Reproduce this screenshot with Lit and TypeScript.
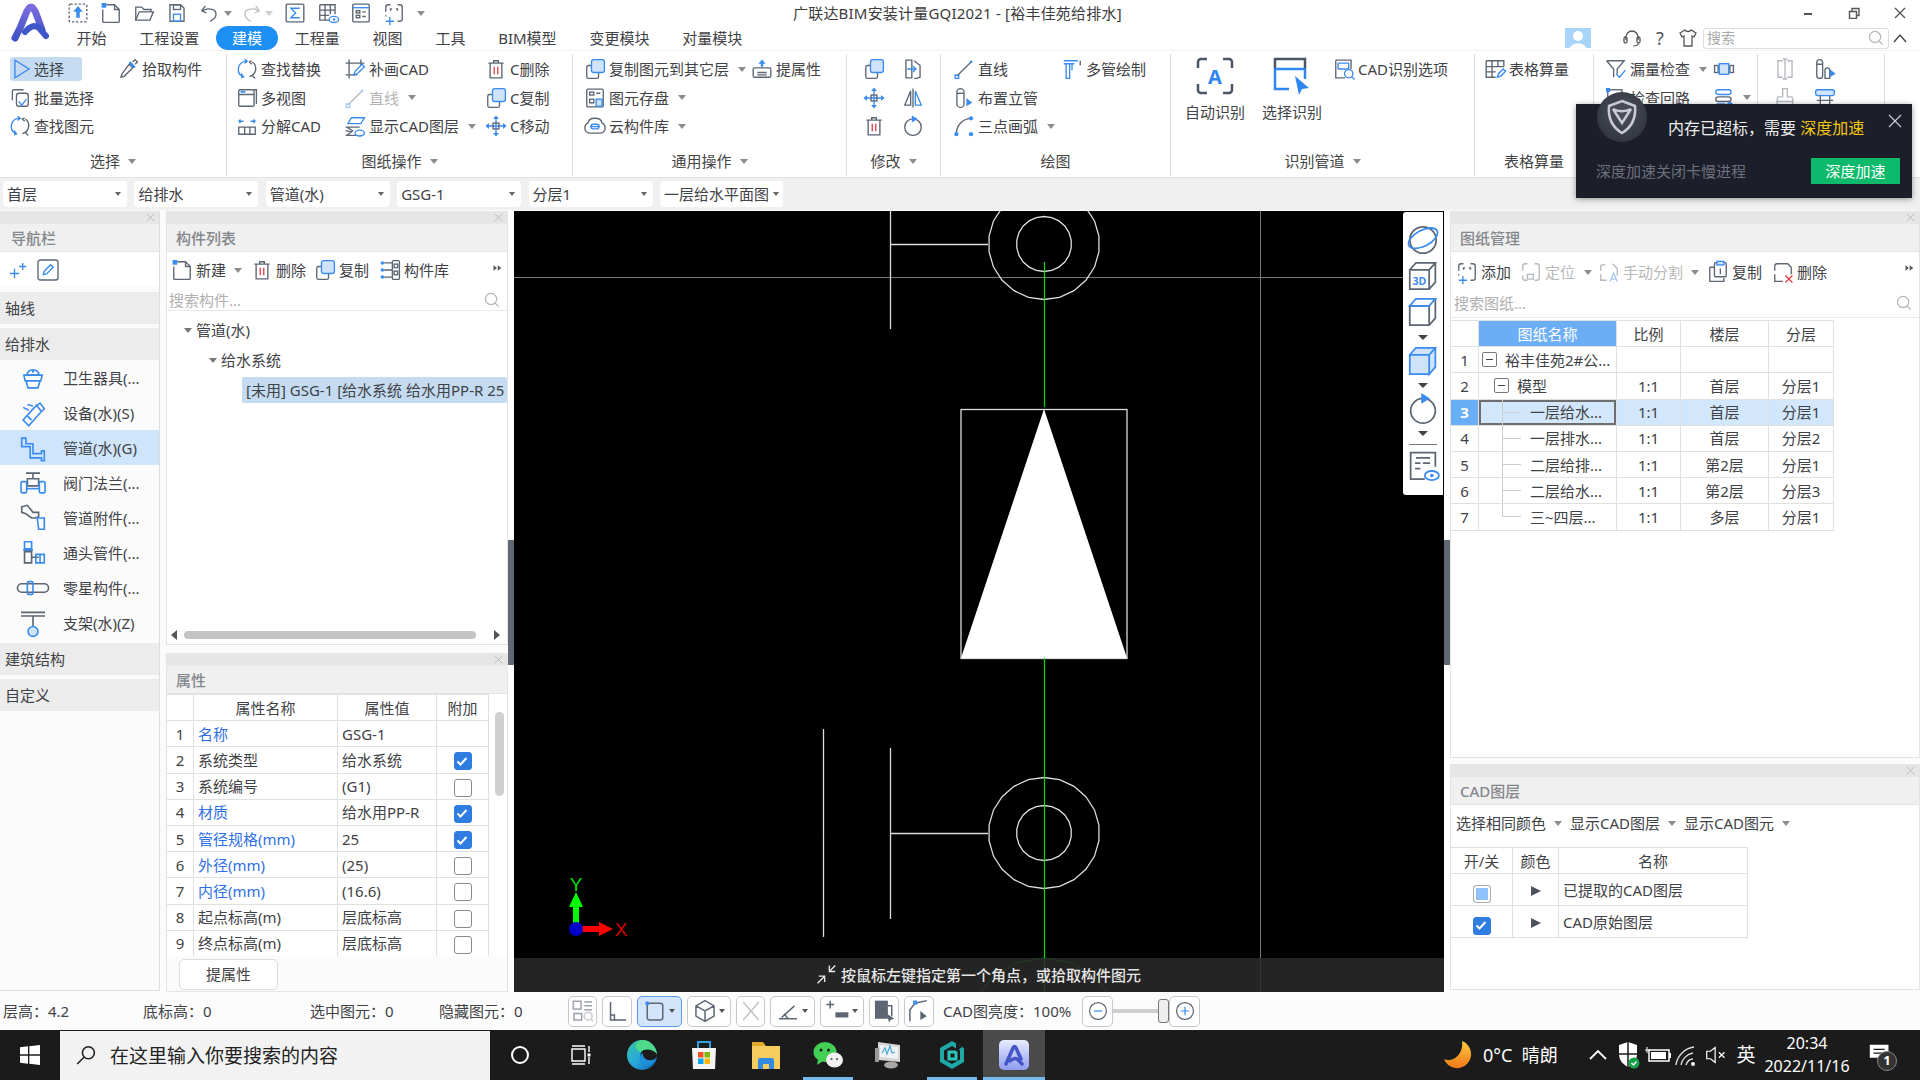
import { LitElement, html, css, svg } from "lit";
import { customElement } from "lit/decorators.js";

const ICONS: Record<string, any> = {
  upload: svg`<rect class="d" x="2.5" y="2.5" width="15" height="15" rx="1"/><path class="bf" d="M10 4l4 5h-2.5v5h-3V9H6z"/>`,
  newf: svg`<path class="g" d="M6 3h7l4 4v10a1 1 0 0 1-1 1H4a1 1 0 0 1-1-1V7"/><path class="g" d="M13 3v4h4"/><rect class="bf" x="2" y="1.5" width="4" height="4"/>`,
  open: svg`<path class="g" d="M3 16V5h5l2 2h6v2"/><path class="g" d="M3 16l3-7h12l-3 7z"/>`,
  save: svg`<path class="g" d="M4 3h9l3 3v11H4z"/><rect class="g" x="7" y="3" width="6" height="4"/><rect class="b" x="7" y="11" width="6" height="6"/>`,
  undo: svg`<path class="g" d="M6 4L3 8l4 2"/><path class="g" d="M3.500 8C9 5 16 7 15 12c-.5 3-3 4-5 5"/>`,
  redo: svg`<path class="g" d="M14 4l3 4-4 2"/><path class="g" d="M16.500 8C11 5 4 7 5 12c.5 3 3 4 5 5"/>`,
  sigma: svg`<rect class="g" x="2.500" y="2.500" width="15" height="15" rx="1"/><path class="b" d="M14 6H6.500l4 4-4 4H14"/>`,
  gridEye: svg`<path class="g" d="M3 3h13v8M3 3v13h8M3 7.500h13M3 12h8M7.500 3v13M12 3v8"/><ellipse class="b" cx="15" cy="15.500" rx="4" ry="2.600"/><circle class="bf" cx="15" cy="15.500" r="1"/>`,
  listDoc: svg`<rect class="g" x="3" y="2.500" width="14" height="15" rx="1"/><path class="b" d="M3 5.500h14"/><rect class="g" x="6" y="8" width="3" height="2"/><rect class="g" x="6" y="12" width="3" height="2"/><path class="g" d="M11 9h3M11 13h3"/>`,
  cadAdd: svg`<path class="g" d="M3 9V5a2 2 0 0 1 2-2h2M13 3h2a2 2 0 0 1 2 2v10a2 2 0 0 1-2 2h-2M3 12v1"/><path class="b" d="M3 17h7M6.500 13.500v7"/><path class="g" d="M7 8V6.500h1.500M13 8V6.500h-1.500"/>`,
  select: svg`<path class="b" d="M4 2.500v15L16 10z"/>`,
  batch: svg`<path class="g" d="M13 3H5a1.500 1.500 0 0 0-1.500 1.500V12"/><rect class="g" x="7" y="6" width="10" height="11" rx="2"/><path class="b" d="M9 13l2.500 3 4-5"/>`,
  find: svg`<path class="b" d="M8 3.500A7 7 0 0 0 5.500 16"/><path class="g" d="M12 16.500A7 7 0 0 0 14.500 4"/><path class="bf" d="M8 1v5l3-2.500zM5 13v5l3-1z"/><path class="g" d="M14 3l-2 1 2 2M14 15l3 3"/>`,
  pick: svg`<path class="g" d="M11 6l3 3-7 7-3 1 1-3z"/><path class="bf" d="M12 3.500l4.500 4.500-1.500 1.500L10.500 5z"/><path class="g" d="M14 4l2-2 2 2-2 2"/>`,
  multi: svg`<rect class="g" x="3" y="3" width="13" height="14" rx="1"/><path class="g" d="M3 7h13M16 3h2v12"/><rect class="bf" x="4.500" y="4" width="4" height="1.500"/>`,
  split: svg`<path class="b" d="M3 6h4M3 6l1.500-1.500M3 6l1.500 1.500M17 6h-4M17 6l-1.500-1.500M17 6l-1.500 1.500"/><path class="g" d="M3 11h14v6H3zM8 11v6M12.500 11v6"/>`,
  redraw: svg`<path class="g" d="M5 2v16M2 5h16M2 15h10M15 2v5"/><path class="b" d="M9 15l1-3 6-6 2 2-6 6z"/>`,
  line: svg`<path class="g" d="M4 16L16 4"/><rect class="b" x="2.500" y="15" width="3" height="3"/><circle class="bf" cx="16" cy="4" r="1.200"/>`,
  layers: svg`<path class="b" d="M4 8l3-5h11l-3 5z"/><path class="g" d="M2 11h12M2 14l5 1M2 18h9M3 11l5 3-5 4"/><ellipse class="b" cx="14" cy="16" rx="4" ry="2.500"/>`,
  del: svg`<path class="g" d="M3.500 5h13M8 5V3h4v2M5 5v12.500h10V5"/><path class="r" d="M8.500 8v6.500M11.500 8v6.500"/>`,
  copy: svg`<rect class="g" x="3" y="7" width="10" height="11" rx="1.500"/><rect class="bfs" x="7" y="2" width="11" height="11" rx="2"/>`,
  move: svg`<path class="b" d="M10 2.500v15M2.500 10h15"/><path class="bf" d="M10 1l2.500 3h-5zM10 19l2.500-3h-5zM1 10l3-2.500v5zM19 10l-3-2.500v5z"/><rect class="g" x="7.500" y="7.500" width="5" height="5"/>`,
  store: svg`<rect class="g" x="3" y="2.500" width="14" height="15" rx="1"/><rect class="g" x="5.500" y="5" width="3.500" height="2.500"/><path class="g" d="M11 6h3.500M5.500 11h3.500v3H5.500z"/><rect class="bfs" x="11" y="11" width="5" height="6"/>`,
  cloud: svg`<path class="g" d="M5 16a4.500 4.500 0 0 1-1-8.500C5 2 15 2 16 7.500A4.500 4.500 0 0 1 15 16z"/><rect class="b" x="6.500" y="8.500" width="7" height="4" rx="2"/><path class="b" d="M6.500 10.500h7"/>`,
  lift: svg`<rect class="g" x="2.500" y="9" width="15" height="8" rx="1"/><path class="g" d="M6 13h8M6 15h8"/><path class="bf" d="M10 2l3 3.500h-2V8H9V5.500H7z"/>`,
  mirror: svg`<path class="g" d="M8 4v12H3z"/><path class="b" d="M12 4v12h5z"/><path class="g" d="M10 2v16"/>`,
  rotate: svg`<circle class="g" cx="10" cy="11" r="7"/><path class="bf" d="M9 1l5 3-5 3z"/>`,
  flip: svg`<path class="g" d="M4 2.500h5v15H4zM11 3l5 4v10l-3 1h-2"/><path class="b" d="M5 10h7M10 7.500l2.500 2.500-2.500 2.500"/>`,
  riser: svg`<rect class="g" x="4" y="2" width="6" height="16" rx="3"/><path class="g" d="M4 6h6"/><path class="bf" d="M12 10l5 4-5 3z"/>`,
  arc: svg`<path class="g" d="M3.500 16C4 9 9 4 15.500 3.500"/><circle class="bf" cx="3.500" cy="17" r="1.800"/><circle class="bf" cx="16" cy="3.500" r="1.800"/><circle class="bf" cx="16" cy="17" r="1.800"/>`,
  mpipe: svg`<path class="b" d="M3 3h12M3 5.500h9M5 6v12h3V6M10 5.500V11"/><path class="g" d="M17 3v4"/>`,
  cadOpt: svg`<path class="g" d="M3 2.500h13V10M3 2.500v15h8"/><rect class="b" x="5" y="5" width="9" height="5" rx=".5"/><circle class="b" cx="14" cy="14" r="3.500"/><path class="b" d="M16.500 16.500L19 19"/>`,
  table: svg`<path class="g" d="M2.500 3h15v5M2.500 3v14h8M2.500 8h15M2.500 12.500h8M7.500 3v14M12.500 3v5"/><path class="b" d="M12 17l1-3 4-4 2 2-4 4z"/>`,
  leak: svg`<path class="g" d="M2 3h15l-6 7v4M2 3l6 7v7"/><path class="b" d="M10 14l3 3 5-6"/>`,
  loop: svg`<rect class="g" x="3" y="3" width="12" height="12"/><rect class="bf" x="1.500" y="1.500" width="3.500" height="3.500"/>`,
  pipes: svg`<rect class="g" x="2" y="7" width="3" height="6"/><rect class="bfs" x="6" y="5.500" width="8" height="9"/><rect class="g" x="15" y="7" width="3" height="6"/>`,
  stack: svg`<rect class="b" x="3" y="3" width="13" height="4" rx="2"/><rect class="g" x="3" y="9" width="13" height="4" rx="2"/><rect class="b" x="3" y="15" width="9" height="4" rx="2"/><circle class="bf" cx="15" cy="16" r="2.500"/>`,
  splitV: svg`<path class="g" d="M8 3h-4v14h4M12 3h4v14h-4M10 1.500v17M8 1.500h4M8 18.500h4"/>`,
  riser2: svg`<rect class="g" x="3" y="2" width="5" height="16" rx="2.500"/><path class="g" d="M3 6h5M10 18v-7a2 2 0 0 1 4 0v7z"/><path class="bf" d="M14 10l5 4-5 3z"/>`,
  brush: svg`<path class="g" d="M8 2h4v7h4l1 4H3l1-4h4zM3.500 13v5h13v-5M8 18v-2M12 18v-2"/>`,
  support: svg`<rect class="bfs" x="2" y="3" width="16" height="5" rx="2"/><path class="g" d="M6 8v10M14 8v10M3 12h14"/>`,
  sparkle: svg`<path class="b" d="M7 9v8M3 13h8M14 4v6M11 7h6"/>`,
  edit: svg`<rect class="g" x="1.500" y="1.500" width="17" height="17" rx="2"/><path class="b" d="M6 14l.8-3 5.400-5.500 2.200 2.200-5.400 5.500z"/>`,
  chain: svg`<circle class="bf" cx="3.500" cy="4" r="1.500"/><circle class="bf" cx="3.500" cy="10" r="1.500"/><circle class="bf" cx="3.500" cy="16" r="1.500"/><path class="g" d="M5 4h7M5 10h7M5 16h7"/><rect class="g" x="12" y="2" width="6" height="16" rx="1"/><rect class="g" x="13.500" y="5" width="3" height="3"/><rect class="g" x="13.500" y="11" width="3" height="3"/>`,
  search: svg`<circle class="l" cx="9" cy="9" r="6"/><path class="l" d="M13.500 13.500l3.500 3.500"/>`,
  x: svg`<path class="l" d="M4 4l12 12M16 4L4 16"/>`,
  twin: svg`<path class="bf2" d="M5 6l5 4-5 4zM11 6l5 4-5 4z"/>`,
  locate: svg`<path class="g" d="M3 9V5a2 2 0 0 1 2-2h2M13 3h2a2 2 0 0 1 2 2v10a2 2 0 0 1-2 2h-2M7 17H5a2 2 0 0 1-2-2v-2"/><rect class="g" x="7" y="12" width="5" height="4"/>`,
  splitA: svg`<path class="g" d="M3 9V5a1 1 0 0 1 1-1h3M13 3l4 4v6M3 12v5h5"/><path class="b" d="M11 18l3-7 3 7M12 16h4"/>`,
  copyS: svg`<path class="g" d="M3 6h4M3 6v12h12v-3"/><rect class="g" x="7" y="2" width="10" height="12" rx="1"/><rect class="bfs" x="9" y="1" width="6" height="3"/><path class="g" d="M12 7v5"/>`,
  delS: svg`<path class="g" d="M3 9V5a2 2 0 0 1 2-2h9l3 3v6M3 12v6h7"/><path class="r" d="M12 13l6 6M18 13l-6 6"/>`,
  globe: svg`<circle class="g" cx="10" cy="10" r="7.500"/><ellipse class="b" cx="10" cy="9" rx="9" ry="4.500" transform="rotate(-28 10 9)"/>`,
  cube3d: svg`<path class="g" d="M2.500 6.500h11v11h-11zM2.500 6.500l3.500-4h11l-3.500 4M17 2.500v11l-3.500 4"/><text x="8" y="15" text-anchor="middle" font-size="6" font-weight="700" fill="#3a8bef">3D</text>`,
  cubeTop: svg`<path class="g" d="M2.500 6.500h11v11h-11zM17 2.500v11l-3.500 4"/><path class="b" d="M2.500 6.500l3.500-4h11l-3.500 4z"/>`,
  cubeFill: svg`<path class="bfs" d="M2.500 6.500h11v11h-11zM2.500 6.500l3.500-4h11l-3.500 4M17 2.500v11l-3.500 4H13.500V6.500"/>`,
  report: svg`<path class="g" d="M3 14V3h14v8M3 14v4h8"/><path class="g" d="M6 6h8M5.500 9h3M10 9h4M5.500 12h3"/><ellipse class="b" cx="15" cy="16" rx="4" ry="2.600"/><circle class="bf" cx="15" cy="16" r="1"/>`,
  mapq: svg`<rect class="g" x="2.500" y="2.500" width="6" height="6"/><path class="g" d="M11 3h6M11 6h6M11 9h6M3 12h6v5H3z"/><circle class="l" cx="14" cy="14" r="3"/><path class="l" d="M16 16l2 2"/>`,
  ortho: svg`<path class="g" d="M5 3v14h12M5 13h3v4"/>`,
  view: svg`<rect class="g" x="4" y="4" width="12" height="13" rx="2"/><circle class="bf" cx="4" cy="4" r="1.500"/>`,
  iso: svg`<path class="g" d="M10 2l7 4v8l-7 4-7-4V6zM3 6l7 4 7-4M10 10v8"/>`,
  cross: svg`<path class="l2" d="M4 3l12 14M16 3L4 17"/>`,
  angle: svg`<path class="g" d="M3 16h14M5 15l10-9M7 12l3 4"/>`,
  dim: svg`<path class="g" d="M4 2v6M1 5h6"/><rect class="gf" x="8" y="11" width="10" height="4"/>`,
  copyMon: svg`<rect class="gf" x="3" y="2" width="10" height="14"/><path class="g" d="M13 6h3v8"/><path class="gf" d="M12 12l6 4-3 1-1 2z"/>`,
  poly: svg`<path class="g" d="M3 18V9l4-5 9-2"/><rect class="b" x="6" y="2.500" width="2" height="2"/><path class="gf" d="M11 10l5 4-5 3z"/>`,
  zoomOut: svg`<circle class="g" cx="10" cy="10" r="8"/><path class="b" d="M6 10h8"/>`,
  zoomIn: svg`<circle class="g" cx="10" cy="10" r="8"/><path class="b" d="M6 10h8M10 6v8"/>`,
  snap: svg`<path class="w" d="M2 17l6-6M3 11h5v5M17 2l-5 5M12 2v5h5"/>`,
  n1: svg`<path class="b" d="M6 8C5 3 15 3 14 8z"/><path class="b" d="M3.500 8h13l-1 4h-11zM5 12l1.500 5h7l1.500-5"/><circle class="bf" cx="10" cy="5.500" r=".8"/>`,
  n2: svg`<path class="b" d="M3 15l8-9 4-3 3 4-3 3-8 9zM6 12l3 3M12 4l4 5M7 8L3 6M10 5l-4-1"/>`,
  n3: svg`<path class="b" d="M2 3h3v4h5v7h6v-2h2v7h-2v-2H8V9H2z"/>`,
  n4: svg`<path class="g" d="M5 3h10M10 3v4M6 7h8v5H6z"/><rect class="b" x="1.500" y="9" width="4" height="8" rx="1"/><rect class="b" x="14.500" y="9" width="4" height="8" rx="1"/><path class="b" d="M5.500 14h9"/>`,
  n5: svg`<path class="g" d="M2 2l4-1 4 5h4v3l-2 1H9L5 7 2 6z"/><path class="b" d="M13 10h5v8h-4z"/>`,
  n6: svg`<path class="b" d="M4 2h5v5H4zM3 8h7"/><path class="g" d="M4 9h5v8H4zM9 13h5"/><path class="b" d="M12 11h6v6h-6zM15 11v6"/>`,
  n7: svg`<path class="g" d="M2 7h16a3 3 0 0 1 0 6H2a3 3 0 0 1 0-6z"/><rect class="b" x="6" y="5.500" width="4" height="9" rx="1"/>`,
  n8: svg`<path class="g" d="M1.500 2.500h17M1.500 5h17M10 5v9"/><circle class="bfs" cx="10" cy="16" r="3.500"/>`,
};

const TB: Record<string, any> = {
  circle: svg`<circle cx="15" cy="15" r="8" fill="none" stroke="#fff" stroke-width="2"/>`,
  view: svg`<path d="M7 6h13M7 9h13v12H7zM7 24h13M24 6v6M24 17v7" fill="none" stroke="#fff" stroke-width="1.400"/><rect x="22.500" y="13.500" width="3" height="3" fill="#fff"/>`,
  edge: svg`<defs><linearGradient id="e1" x1="0" y1="0" x2="1" y2="1"><stop offset="0" stop-color="#37c6a0"/><stop offset=".5" stop-color="#29a7dd"/><stop offset="1" stop-color="#0b62b3"/></linearGradient></defs><circle cx="15" cy="15" r="15" fill="url(#e1)"/><path d="M30 16c0-6-7-9-12-7-5 2-6 8-2 10 5 3 13 1 14-3z" fill="#1b1b1b"/><path d="M28 20c-3 6-11 7-14 3-3-4-1-8 2-10-1 5 5 9 12 7z" fill="#1d8fd8"/><path d="M15 0c8 0 14 6 15 14-4-5-12-6-17-2C5 7 9 1 15 0z" fill="#4fd98b"/>`,
  bag: svg`<path d="M3 8h24l-1 21H4z" fill="#f4f4f4"/><path d="M9 8V2h12v6" fill="none" stroke="#2ea3e0" stroke-width="2"/><rect x="9" y="12" width="5.500" height="5.500" fill="#f25022"/><rect x="15.500" y="12" width="5.500" height="5.500" fill="#7fba00"/><rect x="9" y="18.500" width="5.500" height="5.500" fill="#00a4ef"/><rect x="15.500" y="18.500" width="5.500" height="5.500" fill="#ffb900"/>`,
  folder: svg`<path d="M1 2h11l3 4H1z" fill="#e2a92a"/><path d="M1 6h28v23H1z" fill="#f6cd5e"/><path d="M7 29V20a2 2 0 0 1 2-2h12a2 2 0 0 1 2 2v9h-5v-5h-6v5z" fill="#2f8ce0"/>`,
  wechat: svg`<ellipse cx="12" cy="12" rx="11.500" ry="10" fill="#44cf55"/><path d="M5 19l-1 6 6-4z" fill="#44cf55"/><circle cx="8" cy="10" r="1.500" fill="#1b1b1b"/><circle cx="15.500" cy="10" r="1.500" fill="#1b1b1b"/><ellipse cx="21.500" cy="20" rx="8.500" ry="7.500" fill="#f0f0f0"/><circle cx="18.500" cy="19" r="1.100" fill="#555"/><circle cx="24" cy="19" r="1.100" fill="#555"/>`,
  monitor: svg`<path d="M3 2l22 3v17L3 20z" fill="#d5d5d5"/><path d="M5 5l18 2v12L5 17z" fill="#eef3f8"/><path d="M7 13l3-5 2 6 3-8 2 7 3-1" fill="none" stroke="#4aa5d8" stroke-width="1.200"/><ellipse cx="16" cy="25" rx="7" ry="3.500" fill="#a8a8a8"/><rect x="0" y="8" width="4" height="14" fill="#9a9a9a"/>`,
  cyan: svg`<path d="M15 1l12 7v14l-12 7-12-7V8z" fill="#1fa8a8"/><path d="M15 6l8 4.500v9L15 24l-8-4.500v-9z" fill="#1b1b1b"/><path d="M12 12h7v7h-7z" fill="none" stroke="#2cc4b8" stroke-width="3"/><path d="M19 3l6 4-6 5z" fill="#1b1b1b"/>`,
  app: svg`<defs><linearGradient id="a1" x1="0" y1="0" x2="0" y2="1"><stop offset="0" stop-color="#e8ecff"/><stop offset="1" stop-color="#8f9df0"/></linearGradient></defs><rect width="30" height="30" rx="5" fill="url(#a1)"/><path d="M7 24L14 8q1.500-3 3 0l5 11M11 21q6-5 9 0l3 3" fill="none" stroke="#4455c8" stroke-width="3.500" stroke-linecap="round"/>`,
  win: svg`<path d="M0 3.500l12-1.500v12H0zM14 1.700L30 0v14H14zM0 16h12v12L0 26.500zM14 16h16v14l-16-1.700z" fill="#fff"/>`,
  mag: svg`<circle cx="18" cy="11" r="7.500" fill="none" stroke="#222" stroke-width="2"/><path d="M12.500 16.500L4 25" stroke="#222" stroke-width="2"/>`,
  moon: svg`<defs><linearGradient id="m1" x1="0" y1="0" x2="0" y2="1"><stop offset="0" stop-color="#ffc940"/><stop offset="1" stop-color="#f07818"/></linearGradient></defs><path d="M18 1a14 14 0 1 1-18 18c8 4 20-4 18-18z" fill="url(#m1)"/>`,
  chev: svg`<path d="M7 19l8-8 8 8" fill="none" stroke="#fff" stroke-width="1.800"/>`,
  shield: svg`<path d="M6 5l9-3 9 3v9c0 7-5 11-9 13-4-2-9-6-9-13z" fill="#fff"/><path d="M15 2v25M6 14h18" stroke="#1b1b1b" stroke-width="1.500"/><circle cx="21" cy="23" r="5.500" fill="#1a9e4a"/><path d="M18.500 23l2 2 3-3.500" fill="none" stroke="#fff" stroke-width="1.300"/>`,
  batt: svg`<rect x="6" y="10" width="20" height="11" fill="none" stroke="#fff" stroke-width="1.500"/><rect x="8" y="12" width="15" height="7" fill="#fff"/><rect x="26" y="13" width="2" height="5" fill="#fff"/><path d="M4 7v6M2 10h5" stroke="#fff"/>`,
  wifi: svg`<path d="M3 25c1-9 9-17 18-18M8 25c1-6 6-11 12-12M13 25c1-3 3-6 7-6" fill="none" stroke="#ddd" stroke-width="1.400"/><circle cx="20" cy="24" r="2" fill="#fff"/>`,
  mute: svg`<path d="M4 11h4l5-4v16l-5-4H4z" fill="none" stroke="#fff" stroke-width="1.300"/><path d="M17 12l6 6M23 12l-6 6" stroke="#fff" stroke-width="1.300"/>`,
  note: svg`<path d="M3 4h20v14h-8l-3 4v-4H3z" fill="#fff"/><path d="M7 9h12M7 13h12" stroke="#1b1b1b" stroke-width="1.500"/>`,
};

const ic = (name: string, size = 20) =>
  html`<svg class="ic" width=${size} height=${size} viewBox="1.500 1.500 17 17">${ICONS[name]}</svg>`;
const tb = (name: string, size = 30) =>
  html`<svg class="ic" width=${size} height=${size} viewBox="0 0 30 30">${TB[name]}</svg>`;

// 复选框
const check = (on: boolean) =>
  html`<span class="cb ${on ? "on" : ""}">${on
    ? html`<svg width="18" height="18" viewBox="0 0 18 18"><path d="M4.500 9.500l3 3 6-6.500" fill="none" stroke="#fff" stroke-width="2"/></svg>`
    : ""}</span>`;

type Item = { ic?: string; t?: string; car?: boolean; off?: boolean; sel?: boolean; big?: string };
type Col = { w: number; items: Item[] };
type Group = { w: number; pad: number; label: string; car?: boolean; cols: Col[] };
type Tool = { ic: string; t: string; m: number; car?: number; off?: boolean };

const GROUPS: Group[] = [
  { w: 227, pad: 10, label: "选择", car: true, cols: [
    { w: 108, items: [{ ic: "select", t: "选择", sel: true }, { ic: "batch", t: "批量选择" }, { ic: "find", t: "查找图元" }] },
    { w: 100, items: [{ ic: "pick", t: "拾取构件" }] },
  ] },
  { w: 346, pad: 10, label: "图纸操作", car: true, cols: [
    { w: 108, items: [{ ic: "find", t: "查找替换" }, { ic: "multi", t: "多视图" }, { ic: "split", t: "分解CAD" }] },
    { w: 141, items: [{ ic: "redraw", t: "补画CAD" }, { ic: "line", t: "直线", car: true, off: true }, { ic: "layers", t: "显示CAD图层", car: true }] },
    { w: 80, items: [{ ic: "del", t: "C删除" }, { ic: "copy", t: "C复制" }, { ic: "move", t: "C移动" }] },
  ] },
  { w: 274, pad: 12, label: "通用操作", car: true, cols: [
    { w: 167, items: [{ ic: "copy", t: "复制图元到其它层", car: true }, { ic: "store", t: "图元存盘", car: true }, { ic: "cloud", t: "云构件库", car: true }] },
    { w: 90, items: [{ ic: "lift", t: "提属性" }] },
  ] },
  { w: 94, pad: 17, label: "修改", car: true, cols: [
    { w: 39, items: [{ ic: "copy" }, { ic: "move" }, { ic: "del" }] },
    { w: 30, items: [{ ic: "flip" }, { ic: "mirror" }, { ic: "rotate" }] },
  ] },
  { w: 230, pad: 13, label: "绘图", cols: [
    { w: 108, items: [{ ic: "line", t: "直线" }, { ic: "riser", t: "布置立管" }, { ic: "arc", t: "三点画弧", car: true }] },
    { w: 100, items: [{ ic: "mpipe", t: "多管绘制" }] },
  ] },
  { w: 304, pad: 14, label: "识别管道", car: true, cols: [
    { w: 77, items: [{ big: "auto", t: "自动识别" }] },
    { w: 72, items: [{ big: "pick", t: "选择识别" }] },
    { w: 130, items: [{ ic: "cadOpt", t: "CAD识别选项" }] },
  ] },
  { w: 119, pad: 10, label: "表格算量", cols: [{ w: 100, items: [{ ic: "table", t: "表格算量" }] }] },
  { w: 164, pad: 12, label: "", cols: [
    { w: 108, items: [{ ic: "leak", t: "漏量检查", car: true }, { ic: "loop", t: "检查回路" }] },
    { w: 40, items: [{ ic: "pipes" }, { ic: "stack", car: true }] },
  ] },
  { w: 127, pad: 17, label: "", cols: [
    { w: 40, items: [{ ic: "splitV", off: true }, { ic: "brush", off: true }] },
    { w: 40, items: [{ ic: "riser2" }, { ic: "support" }] },
  ] },
];

const TABS = ["开始", "工程设置", "建模", "工程量", "视图", "工具", "BIM模型", "变更模块", "对量模块"];
const QAT = ["upload", "newf", "open", "save"];
const QAT2 = ["sigma", "gridEye", "listDoc", "cadAdd"];
const SELECTS = ["首层", "给排水", "管道(水)", "GSG-1", "分层1", "一层给水平面图"];
const NAV = [
  ["n1", "卫生器具(..."], ["n2", "设备(水)(S)"], ["n3", "管道(水)(G)"], ["n4", "阀门法兰(..."],
  ["n5", "管道附件(..."], ["n6", "通头管件(..."], ["n7", "零星构件(..."], ["n8", "支架(水)(Z)"],
];
const LIST_TOOLS: Tool[] = [
  { ic: "newf", t: "新建", m: 5, car: 8 },
  { ic: "del", t: "删除", m: 10 },
  { ic: "copy", t: "复制", m: 9 },
  { ic: "chain", t: "构件库", m: 11 },
];
const DRAW_TOOLS: Tool[] = [
  { ic: "cadAdd", t: "添加", m: 6 },
  { ic: "locate", t: "定位", m: 10, car: 9, off: true },
  { ic: "splitA", t: "手动分割", m: 7, car: 8, off: true },
  { ic: "copyS", t: "复制", m: 9 },
  { ic: "delS", t: "删除", m: 11 },
];
const PROPS: [string, string, boolean | null, boolean][] = [
  ["名称", "GSG-1", null, true],
  ["系统类型", "给水系统", true, false],
  ["系统编号", "(G1)", false, false],
  ["材质", "给水用PP-R", true, true],
  ["管径规格(mm)", "25", true, true],
  ["外径(mm)", "(25)", false, true],
  ["内径(mm)", "(16.6)", false, true],
  ["起点标高(m)", "层底标高", false, false],
  ["终点标高(m)", "层底标高", false, false],
];
const DRAWINGS = [
  ["裕丰佳苑2#公...", "", "", "", "b1"],
  ["模型", "1:1", "首层", "分层1", "b2"],
  ["一层给水...", "1:1", "首层", "分层1", "leaf"],
  ["一层排水...", "1:1", "首层", "分层2", "leaf"],
  ["二层给排...", "1:1", "第2层", "分层1", "leaf"],
  ["二层给水...", "1:1", "第2层", "分层3", "leaf"],
  ["三~四层...", "1:1", "多层", "分层1", "last"],
];
const STATUS_BTNS = [
  ["mapq", 29, false, true], ["ortho", 30, false, false], ["view", 45, true, false], ["iso", 44, true, false],
  ["cross", 29, false, true], ["angle", 45, true, false], ["dim", 44, true, false], ["copyMon", 30, false, false], ["poly", 30, false, false],
] as [string, number, boolean, boolean][];
const STATUS_TEXT: [string, number][] = [["层高：4.2", 140], ["底标高：0", 167], ["选中图元：0", 129], ["隐藏图元：0", 129]];
const STATUS_SEL = 2;

// CAD 图里的圆都是折线段画的
const ring = (cx: number, cy: number, r: number, n = 22) =>
  Array.from({ length: n }, (_, i) => {
    const a = (i / n) * Math.PI * 2;
    return `${(cx + r * Math.sin(a)).toFixed(1)},${(cy - r * Math.cos(a)).toFixed(1)}`;
  }).join(" ");

@customElement("app-root")
export class AppRoot extends LitElement {
  static styles = css`
    :host {
      display: flex;
      flex-direction: column;
      position: relative;
      width: 1920px;
      height: 1080px;
      overflow: hidden;
      background: #fbfbfb;
      color: #3f4246;
      font: 15px/20px "Noto Sans", "Noto Sans CJK SC", sans-serif;
    }
    * { box-sizing: border-box; }
    .ic { display: block; flex: none; overflow: visible; }
    .ic .g, .ic .b, .ic .r, .ic .l, .ic .l2, .ic .d, .ic .w, .ic .bfs { fill: none; stroke-width: 1.150; }
    .ic .g { stroke: #5d6673; }
    .ic .b { stroke: #3a8bef; }
    .ic .r { stroke: #e5404a; }
    .ic .l { stroke: #b5b5b5; stroke-width: 1.300; }
    .ic .l2 { stroke: #9a9a9a; }
    .ic .w { stroke: #e8e8e8; }
    .ic .d { stroke: #5d6673; stroke-dasharray: 2 1.500; }
    .ic .bf { fill: #3a8bef; }
    .ic .bf2 { fill: #555; }
    .ic .gf { fill: #5d6673; }
    .ic .bfs { fill: #cfe3fb; stroke: #3a8bef; }
    .car { display: inline-block; flex: none; width: 0; height: 0; border: 4px solid transparent; border-top: 5px solid #8c8c8c; border-bottom: 0; }

    .head { height: 50px; background: #fff; display: grid; grid-template-columns: 62px 1fr; }
    .logo { padding: 3px 0 0 10px; }
    .hrow1 { height: 26px; display: grid; grid-template-columns: 731px auto 1fr; align-items: center; }
    .qat { display: flex; padding-left: 6px; align-items: center; }
    .qat .slot { width: 33px; display: flex; align-items: center; gap: 4px; }
    .qat .slot.redo { width: 44px; margin-left: 8px; opacity: 0.4; }
    .title { color: #3c3c3c; white-space: nowrap; letter-spacing: 0.2px; }
    .win { display: flex; justify-content: flex-end; padding-right: 14px; gap: 34px; align-items: center; }
    .win svg { stroke: #555; fill: none; stroke-width: 1.400; }
    .hrow2 { height: 24px; display: flex; align-items: center; margin-left: -2px; }
    .tab { padding: 0 16.400px; height: 24px; line-height: 24px; border-radius: 12px; white-space: nowrap; }
    .tab.on { background: #1e90f5; color: #fff; }
    .hright { margin-left: auto; display: flex; align-items: center; padding-right: 10px; }
    .avatar { width: 26px; height: 20px; background: #a9d4fa; margin-right: 26px; display: flex; justify-content: center; }
    .hicon { width: 30px; display: flex; justify-content: center; color: #555; font-size: 18px; }
    .hicon.q { width: 26px; }
    .qsearch { width: 186px; height: 21px; border: 1px solid #ddd; border-radius: 3px; display: flex; align-items: center; justify-content: space-between; padding: 0 4px 0 3px; color: #aaa; font-size: 14px; }
    .collapse { width: 20px; display: flex; justify-content: center; margin-left: 1px; }

    .ribbon { height: 127px; background: #fff; display: flex; border-top: 1px solid #f2f2f2; }
    .grp { display: flex; flex-direction: column; height: 122px; margin-top: 3px; border-right: 1px solid #dcdcdc; }
    .cols { flex: 1; display: flex; padding-top: 1px; min-height: 0; }
    .col { display: flex; flex-direction: column; }
    .it { height: 28.500px; display: flex; align-items: center; gap: 4px; white-space: nowrap; }
    .it.sel { background: #c5dbf2; border-radius: 3px; width: 72px; padding-left: 2px; height: 24px; margin: 2px 0 2.500px; }
    .it.sel .ic { margin-right: -2px; }
    .it.off { color: #b4b4b4; }
    .it.off .ic { opacity: 0.45; }
    .it .car { margin-left: 5px; }
    .big { display: flex; flex-direction: column; align-items: center; width: 60px; padding-top: 2px; }
    .big span { margin-top: 7px; white-space: nowrap; }
    .glab { height: 30px; display: flex; justify-content: center; align-items: center; gap: 8px; color: #444; }

    .selbar { height: 33px; background: #f0f0f0; border-top: 1px solid #e2e2e2; display: flex; gap: 7.400px; padding: 3px 0 0 3px; }
    .selbox { width: 124px; height: 26px; background: #fff; border-radius: 4px; display: flex; align-items: center; justify-content: space-between; padding: 0 6px 0 4px; white-space: nowrap; overflow: hidden; }
    .selbox.last { width: 123px; padding: 0 4px; }
    .selbox .car { border-width: 3px; border-top-width: 4px; border-top-color: #666; border-bottom: 0; }

    .main { height: 782px; display: flex; padding-top: 1px; }
    .left { width: 160px; border-right: 1px solid #ddd; border-bottom: 1px solid #ddd; margin-bottom: 1px; }
    .mid { width: 342px; margin-left: 6px; display: flex; flex-direction: column; }
    .right { width: 470px; display: flex; flex-direction: column; }
    .split { width: 6px; background: #fff; padding-top: 329px; }
    .grip { height: 125px; background: #5f6873; }
    .canvas { width: 930px; position: relative; background: #000; overflow: hidden; }
    .canvas > svg { position: absolute; inset: 0; }
    .hint { position: absolute; left: 0; right: 0; bottom: 0; height: 34px; background: rgba(42, 42, 42, 0.86); color: #e6e6e6; display: flex; align-items: center; justify-content: center; gap: 4px; font-weight: 500; }
    .vtool { position: absolute; right: 1px; top: 1px; width: 40px; height: 283px; background: #fff; border-radius: 3px 0 0 3px; display: flex; flex-direction: column; align-items: center; padding-top: 10px; }
    .vtool .ic .g, .vtool .ic .b, .vtool .ic .bfs { stroke-width: 1; }
    .vs { height: 36px; display: flex; align-items: center; }
    .vs.t { height: 34px; }
    .vs.m { height: 40px; }
    .vc { height: 14px; display: flex; align-items: center; }
    .vc .car { border-top-color: #444; border-width: 5px; border-top-width: 5px; border-bottom: 0; }
    .vline { width: 28px; height: 1px; background: #777; margin-top: 4px; flex: none; }

    .strip { height: 13px; background: #e6e6e6; display: flex; justify-content: flex-end; align-items: center; padding-right: 3px; flex: none; }
    .ptitle { height: 28px; background: #f0f0f0; padding-left: 9px; line-height: 28px; color: #84878b; font-weight: 500; flex: none; border-bottom: 1px solid #e4e4e4; }
    .left .ptitle { padding-left: 11px; }
    .ptool { height: 34px; background: #fff; display: flex; align-items: center; flex: none; position: relative; white-space: nowrap; padding-top: 2px; }
    .ptool.nav { gap: 10px; padding-left: 8px; }
    .ptool.draw { padding-top: 6px; }
    .ptool.lay { height: 32px; gap: 8px; padding: 4px 0 0 5px; }
    .tt { display: flex; align-items: center; gap: 4px; }
    .tt.off { color: #b8b8b8; }
    .tt.off .ic { opacity: 0.45; }
    .more { position: absolute; right: 3px; top: 3px; width: 14px; height: 26px; display: flex; align-items: center; justify-content: center; border-radius: 4px; background: #fff; }
    .psearch { height: 22px; display: flex; align-items: center; justify-content: space-between; padding: 0 7px 0 2px; color: #b0b0b0; background: #fff; flex: none; margin-top: 3px; border-bottom: 1px solid #e8e8e8; }
    .psearch.draw { height: 30px; margin: 2px 0; padding-left: 3px; }
    .panel { background: #fff; display: flex; flex-direction: column; border: 1px solid #e4e4e4; border-top: 0; min-height: 0; }
    .p-list { height: 434px; }
    .p-prop { flex: 1; margin-top: 8px; }
    .p-draw { height: 547px; }
    .p-lay { flex: 1; margin: 6px 0 2px; }

    .gray { height: 32px; background: #ececec; line-height: 32px; padding-left: 5px; margin-top: 4px; }
    .gray.first { margin-top: 6px; }
    .gray.sec { margin-top: 2px; }
    .nit { height: 35.100px; display: flex; align-items: center; padding-left: 21px; gap: 18px; white-space: nowrap; }
    .nit.on { background: #cfe5fc; }

    .tree { flex: 1; padding-top: 4px; overflow: hidden; }
    .node { height: 30px; display: flex; align-items: center; gap: 4px; }
    .node .car { border-top-color: #777; }
    .node.a { padding-left: 17px; }
    .node.b { padding-left: 42px; }
    .tsel { height: 26px; margin: 2px 0 0 75px; background: #c5dbf2; border-radius: 2px; line-height: 26px; padding-left: 4px; white-space: nowrap; overflow: hidden; }
    .hbar { height: 18px; display: flex; align-items: center; padding: 0 4px; flex: none; }
    .hbar i { width: 0; height: 0; border: 5px solid transparent; }
    .hbar .l { border-right: 6px solid #555; border-left: 0; }
    .hbar .r { border-left: 6px solid #555; border-right: 0; }
    .hbar b { width: 292px; height: 8px; background: #c4c4c4; border-radius: 4px; margin: 0 18px 0 7px; }

    table { border-collapse: collapse; table-layout: fixed; background: #fff; }
    td, th { border: 1px solid #e0e0e0; padding: 0; font-weight: 400; text-align: center; white-space: nowrap; overflow: hidden; }
    .ptab { width: 322px; margin-left: -1px; }
    .ptab col:nth-child(1) { width: 27px; }
    .ptab col:nth-child(2) { width: 144px; }
    .ptab col:nth-child(3) { width: 99px; }
    .ptab col:nth-child(4) { width: 52px; }
    .ptab td, .ptab th, .dtab td, .dtab th { height: 26.200px; }
    .ptab td.nm, .ptab td.vl { text-align: left; padding-left: 4px; }
    .blue { color: #2e6fe6; }
    .proprow { display: flex; height: 262px; flex: none; }
    .pscroll { flex: 1; padding: 18px 0 0 6px; }
    .pscroll b { display: block; width: 9px; height: 84px; background: #cfcfcf; border-radius: 5px; }
    .cb { display: inline-block; width: 18px; height: 18px; border: 1.500px solid #8a8a8a; border-radius: 3px; background: #fff; vertical-align: middle; }
    .cb svg { display: block; margin: -1.500px; }
    .cb.on { background: #2f7de1; border-color: #2f7de1; }
    .cb.part { background: #8fc1fb; border-color: #aaa; box-shadow: inset 0 0 0 2px #fff; }
    .pfoot { flex: 1; background: #fbfbfb; padding: 3px 0 0 12px; }
    .pbtn { width: 99px; height: 31px; background: #fff; border: 1px solid #ddd; border-radius: 5px; text-align: center; line-height: 29px; }

    .dtab { width: 383px; margin-left: -1px; }
    .dtab col:nth-child(1) { width: 28px; }
    .dtab col:nth-child(2) { width: 138px; }
    .dtab col:nth-child(3) { width: 64px; }
    .dtab col:nth-child(4) { width: 88px; }
    .dtab col:nth-child(5) { width: 65px; }
    .dtab .hd { background: #6caef5; color: #fff; }
    .dtab tr.cur td { background: #d2e7fb; }
    .dtab tr.cur td.n { background: #68aef5; color: #fff; font-weight: 700; }
    .dtab tr.cur td.nm { box-shadow: inset 0 0 0 2px #6e6e6e; }
    .cell { display: flex; align-items: center; height: 25px; }
    .tw { flex: none; height: 25px; width: 51px; display: flex; align-items: center; }
    .tw.leaf { background: linear-gradient(#ccc, #ccc) 23px 0 / 1px 100% no-repeat, linear-gradient(#ccc, #ccc) 23px 50% / 19px 1px no-repeat; }
    .tw.last { background: linear-gradient(#ccc, #ccc) 23px 0 / 1px 50% no-repeat, linear-gradient(#ccc, #ccc) 23px 50% / 19px 1px no-repeat; }
    .tw.b1 { width: 26px; padding-left: 3px; }
    .tw.b2 { width: 38px; padding-left: 15px; }
    .mbox { width: 15px; height: 15px; border: 1px solid #777; border-radius: 2px; display: flex; align-items: center; justify-content: center; background: #fff; }
    .mbox::after { content: ""; width: 7px; height: 1px; background: #444; }

    .ltab { width: 297px; margin: 10px 0 0 -1px; }
    .ltab col:nth-child(1) { width: 62px; }
    .ltab col:nth-child(2) { width: 46px; }
    .ltab col:nth-child(3) { width: 189px; }
    .ltab tr { height: 32px; }
    .ltab tr:first-child { height: 26px; }
    .ltab td .cb { margin-top: 8px; }
    .ltab td.tx { text-align: left; padding-left: 4px; }
    .tri { display: inline-block; vertical-align: middle; }

    .status { height: 38px; background: #fcfcfc; display: flex; align-items: center; white-space: nowrap; padding-left: 3px; }
    .st { flex: none; }
    .sbtn { height: 31px; background: #fff; border: 1px solid #c8c8c8; border-radius: 5px; display: flex; align-items: center; justify-content: center; gap: 3px; margin-right: 5px; flex: none; }
    .sbtn.sel { background: #d3e5fa; border-color: #5b9de8; }
    .sbtn.dim .ic { opacity: 0.6; }
    .sbtn.zm { width: 31px; margin-right: 0; }
    .sbtn .car { border-width: 3px; border-top-width: 4px; border-top-color: #555; border-bottom: 0; }
    .bright { margin: 0 11px 0 4px; }
    .slider { width: 45px; height: 4px; background: #cfcfcf; flex: none; }
    .thumb { width: 11px; height: 24px; border: 1px solid #777; border-radius: 3px; background: #eee; flex: none; }

    .task { height: 50px; background: #1b1b1b; display: flex; align-items: center; color: #fff; }
    .start { width: 60px; display: flex; justify-content: center; }
    .tsearch { width: 430px; height: 49px; margin-top: 1px; background: #f2f2f2; display: flex; align-items: center; padding-left: 14px; gap: 12px; color: #222; font-size: 19px; white-space: nowrap; flex: none; }
    .tslot { width: 62px; height: 50px; display: flex; align-items: center; justify-content: center; flex: none; }
    .tslot.first { width: 59px; }
    .tslot.run { background: linear-gradient(#76b9ed, #76b9ed) center bottom / 50px 3px no-repeat; }
    .tslot.act { background: linear-gradient(#76b9ed, #76b9ed) center bottom / 100% 3px no-repeat, #4a4a4a; }
    .tray { margin-left: auto; width: 476px; height: 50px; display: grid; grid-template-columns: 39px 75px 25px 30px 30px 30px 30px 28px 30px 92px 67px; align-items: center; justify-items: center; }
    .tray .moon { justify-self: start; }
    .weather { font-size: 18px; white-space: nowrap; justify-self: start; }
    .ime { font-size: 19px; }
    .clock { text-align: center; font-size: 16px; line-height: 23px; white-space: nowrap; }
    .noti { position: relative; justify-self: start; margin-left: 14px; }
    .badge { position: absolute; left: 10px; top: 10px; width: 20px; height: 20px; border-radius: 50%; background: #333; border: 1.500px solid #8a8a8a; text-align: center; font-size: 13px; line-height: 17px; font-weight: 700; }

    .tip { position: absolute; left: 1576px; top: 104px; width: 336px; height: 94px; background: #1c1f2a; color: #eee; box-shadow: 0 1px 6px rgba(0, 0, 0, 0.4); }
    .tip-logo { position: absolute; left: 21px; top: -12px; width: 50px; height: 50px; border-radius: 50%; background: radial-gradient(circle at 50% 40%, #4b505c, #2a2e39); display: flex; align-items: center; justify-content: center; }
    .tip-top { padding: 13px 0 0 92px; font-size: 16px; height: 54px; line-height: 22px; white-space: nowrap; }
    .tip-top em { font-style: normal; color: #f4c612; }
    .tip-x { position: absolute; left: 312px; top: 8px; }
    .tip-bot { display: flex; align-items: center; padding: 0 12px 0 20px; justify-content: space-between; color: #6c717d; white-space: nowrap; }
    .tip-btn { width: 89px; height: 26px; background: #0db96b; color: #fff; text-align: center; line-height: 26px; }
  `;

  panelHead(title: string) {
    return html`<div class="strip">${ic("x", 11)}</div><div class="ptitle">${title}</div>`;
  }

  renderTool(t: Tool) {
    return html`<span class="tt ${t.off ? "off" : ""}" style="margin-left:${t.m}px">${ic(t.ic)}${t.t}</span>${t.car
      ? html`<i class="car" style="margin-left:${t.car}px"></i>`
      : ""}`;
  }

  renderItem(it: Item) {
    if (it.big === "auto") {
      return html`<div class="big"><svg class="ic" width="38" height="38" viewBox="0 0 38 38">
        <path d="M2 11V5a3 3 0 0 1 3-3h6M27 2h6a3 3 0 0 1 3 3v6M36 27v6a3 3 0 0 1-3 3h-6M11 36H5a3 3 0 0 1-3-3v-6" fill="none" stroke="#4a5566" stroke-width="2.500"/>
        <text x="19" y="27" text-anchor="middle" font-size="20" font-weight="700" fill="#2f86ee">A</text>
      </svg><span>${it.t}</span></div>`;
    }
    if (it.big === "pick") {
      return html`<div class="big"><svg class="ic" width="38" height="38" viewBox="0 0 38 38">
        <path d="M2 12V2h30v10" fill="none" stroke="#4a5566" stroke-width="2.500"/>
        <path d="M2 12v20h14M32 12v10M2 12h30" fill="none" stroke="#2f86ee" stroke-width="2.500"/>
        <path d="M22 19l14 12-7 1-3 6z" fill="#2f86ee"/>
      </svg><span>${it.t}</span></div>`;
    }
    return html`<div class="it ${it.sel ? "sel" : ""} ${it.off ? "off" : ""}">
      ${it.ic ? ic(it.ic) : ""}${it.t ? html`<span>${it.t}</span>` : ""}${it.car ? html`<i class="car"></i>` : ""}
    </div>`;
  }

  renderHead() {
    return html`<div class="head">
      <div class="logo"><svg class="ic" width="44" height="40" viewBox="0 0 44 40">
        <defs><linearGradient id="lg" x1="0" y1="0" x2="0" y2="1"><stop offset="0" stop-color="#7a6ce0"/><stop offset="1" stop-color="#3f52c4"/></linearGradient></defs>
        <path d="M5 35Q11 24 15 13Q18 4 21 4Q24 4 27 13L32 27" fill="none" stroke="url(#lg)" stroke-width="7" stroke-linecap="round"/>
        <path d="M15 29Q23 20 29 25L36 33" fill="none" stroke="#3e56c8" stroke-width="6" stroke-linecap="round"/>
      </svg></div>
      <div>
        <div class="hrow1">
          <div class="qat">
            ${QAT.map((n) => html`<div class="slot">${ic(n)}</div>`)}
            <div class="slot">${ic("undo")}<i class="car"></i></div>
            <div class="slot redo">${ic("redo")}<i class="car"></i></div>
            ${QAT2.map((n) => html`<div class="slot">${ic(n)}</div>`)}
            <div class="slot"><i class="car"></i></div>
          </div>
          <div class="title">广联达BIM安装计量GQI2021 - [裕丰佳苑给排水]</div>
          <div class="win">
            <svg width="12" height="12"><path d="M2 7h8" stroke-width="2"/></svg>
            <svg width="12" height="12"><path d="M1.500 4.500h7v7h-7zM4 4V1.500h7v7H9"/></svg>
            <svg width="12" height="12"><path d="M1 1l10 10M11 1L1 11"/></svg>
          </div>
        </div>
        <div class="hrow2">
          ${TABS.map((t) => html`<div class="tab ${t === "建模" ? "on" : ""}">${t}</div>`)}
          <div class="hright">
            <div class="avatar"><svg width="20" height="20" viewBox="0 0 20 20"><circle cx="10" cy="8" r="5" fill="#fff"/><path d="M2 20c1-6 15-6 16 0z" fill="#fff"/></svg></div>
            <div class="hicon"><svg width="20" height="20" viewBox="0 0 20 20" fill="none" stroke="#555" stroke-width="1.300"><path d="M4 12V9a6 6 0 0 1 12 0v3"/><rect x="2" y="9" width="3" height="6" rx="1.500"/><rect x="15" y="9" width="3" height="6" rx="1.500"/><path d="M16.500 15c0 2-3 3-5 3"/></svg></div>
            <div class="hicon q">?</div>
            <div class="hicon"><svg width="20" height="20" viewBox="0 0 20 20" fill="none" stroke="#555" stroke-width="1.300"><path d="M7 2L2 5l2 4 2-1v10h8V8l2 1 2-4-5-3c-1 2-5 2-6 0z"/></svg></div>
            <div class="qsearch"><span>搜索</span>${ic("search", 16)}</div>
            <div class="collapse"><svg width="18" height="14" viewBox="0 0 18 14"><path d="M3 11l6-7 6 7" fill="none" stroke="#444" stroke-width="1.400"/></svg></div>
          </div>
        </div>
      </div>
    </div>`;
  }

  renderRibbon() {
    return html`<div class="ribbon">
      ${GROUPS.map((g) => html`<div class="grp" style="width:${g.w}px">
        <div class="cols" style="padding-left:${g.pad}px">
          ${g.cols.map((c) => html`<div class="col" style="width:${c.w}px">${c.items.map((it) => this.renderItem(it))}</div>`)}
        </div>
        <div class="glab">${g.label}${g.car ? html`<i class="car"></i>` : ""}</div>
      </div>`)}
    </div>`;
  }

  renderNav() {
    return html`<div class="left">
      ${this.panelHead("导航栏")}
      <div class="ptool nav">${ic("sparkle")}${ic("edit")}</div>
      <div class="gray first">轴线</div>
      <div class="gray">给排水</div>
      <div>
        ${NAV.map(([n, t]) => html`<div class="nit ${t.startsWith("管道(水)") ? "on" : ""}">${ic(n, 24)}<span>${t}</span></div>`)}
      </div>
      <div class="gray sec">建筑结构</div>
      <div class="gray">自定义</div>
    </div>`;
  }

  renderMid() {
    return html`<div class="mid">
      <div class="panel p-list">
        ${this.panelHead("构件列表")}
        <div class="ptool">
          ${LIST_TOOLS.map((t) => this.renderTool(t))}
          <div class="more">${ic("twin", 12)}</div>
        </div>
        <div class="psearch"><span>搜索构件...</span>${ic("search", 16)}</div>
        <div class="tree">
          <div class="node a"><i class="car"></i>管道(水)</div>
          <div class="node b"><i class="car"></i>给水系统</div>
          <div class="tsel">[未用] GSG-1 [给水系统 给水用PP-R 25</div>
        </div>
        <div class="hbar"><i class="l"></i><b></b><i class="r"></i></div>
      </div>
      <div class="panel p-prop">
        ${this.panelHead("属性")}
        <div class="proprow">
          <table class="ptab">
            <colgroup><col /><col /><col /><col /></colgroup>
            <tr><th></th><th>属性名称</th><th>属性值</th><th>附加</th></tr>
            ${PROPS.map(([n, v, c, blue], i) => html`<tr>
              <td>${i + 1}</td><td class="nm ${blue ? "blue" : ""}">${n}</td><td class="vl">${v}</td>
              <td>${c === null ? "" : check(c)}</td>
            </tr>`)}
          </table>
          <div class="pscroll"><b></b></div>
        </div>
        <div class="pfoot"><div class="pbtn">提属性</div></div>
      </div>
    </div>`;
  }

  renderCanvas() {
    return html`<div class="canvas">
      <svg width="930" height="781" viewBox="514 211 930 781">
        <g fill="none" stroke="#7a7a7a">
          <path d="M514 277.500H1404M1260.500 211V992"/>
        </g>
        <g fill="none" stroke="#dcdcdc" stroke-width="1.300">
          <path d="M890.500 211V329M890 244.500H988M823.500 729V937M890.500 748V919M890 833.500H988"/>
          <polygon points=${ring(1044, 244, 55.5)}/><polygon points=${ring(1044, 244, 27.5)}/>
          <polygon points=${ring(1044, 833, 55.5)}/><polygon points=${ring(1044, 833, 27.5)}/>
          <rect x="961" y="409.500" width="166" height="249"/>
        </g>
        <polygon points="1044,409 961,658 1127,658" fill="#fff"/>
        <path d="M1044.500 262V407M1044.500 658V992" stroke="#00e000" stroke-width="1.200"/>
        <polygon points=${ring(1044, 1036, 78, 18)} fill="none" stroke="#00b000"/>
        <path d="M576 929V906" stroke="#00ff00" stroke-width="6"/>
        <polygon points="576,892 583,907 569,907" fill="#00ff00"/>
        <text x="576" y="891" text-anchor="middle" fill="#00dd00" font-size="19" font-family="Liberation Sans">Y</text>
        <path d="M576 929H600" stroke="#ff0000" stroke-width="6"/>
        <polygon points="613,929 599,922 599,936" fill="#ff0000"/>
        <text x="621" y="936" text-anchor="middle" fill="#d00000" font-size="19" font-family="Liberation Sans">X</text>
        <circle cx="576" cy="929" r="7" fill="#0000c8"/>
      </svg>
      <div class="hint">${ic("snap")}<span>按鼠标左键指定第一个角点，或拾取构件图元</span></div>
      <div class="vtool">
        <div class="vs">${ic("globe", 30)}</div>
        <div class="vs">${ic("cube3d", 30)}</div>
        <div class="vs">${ic("cubeTop", 30)}</div>
        <div class="vc"><i class="car"></i></div>
        <div class="vs t">${ic("cubeFill", 30)}</div>
        <div class="vc"><i class="car"></i></div>
        <div class="vs t">${ic("rotate", 30)}</div>
        <div class="vc"><i class="car"></i></div>
        <div class="vline"></div>
        <div class="vs m">${ic("report", 30)}</div>
      </div>
    </div>`;
  }

  renderRight() {
    return html`<div class="right">
      <div class="panel p-draw">
        ${this.panelHead("图纸管理")}
        <div class="ptool draw">
          ${DRAW_TOOLS.map((t) => this.renderTool(t))}
          <div class="more">${ic("twin", 12)}</div>
        </div>
        <div class="psearch draw"><span>搜索图纸...</span>${ic("search", 16)}</div>
        <table class="dtab">
          <colgroup><col /><col /><col /><col /><col /></colgroup>
          <tr><th></th><th class="hd">图纸名称</th><th>比例</th><th>楼层</th><th>分层</th></tr>
          ${DRAWINGS.map(([n, r, f, s, k], i) => html`<tr class="${i === 2 ? "cur" : ""}">
            <td class="n">${i + 1}</td>
            <td class="nm"><div class="cell"><span class="tw ${k}">${k === "b1" || k === "b2" ? html`<span class="mbox"></span>` : ""}</span>${n}</div></td>
            <td>${r}</td><td>${f}</td><td>${s}</td>
          </tr>`)}
        </table>
      </div>
      <div class="panel p-lay">
        ${this.panelHead("CAD图层")}
        <div class="ptool lay">
          <span>选择相同颜色</span><i class="car"></i><span>显示CAD图层</span><i class="car"></i><span>显示CAD图元</span><i class="car"></i>
        </div>
        <table class="ltab">
          <colgroup><col /><col /><col /></colgroup>
          <tr><th>开/关</th><th>颜色</th><th>名称</th></tr>
          ${["已提取的CAD图层", "CAD原始图层"].map((t, i) => html`<tr>
            <td>${i === 0 ? html`<span class="cb part"></span>` : check(true)}</td>
            <td><svg class="tri" width="10" height="10" viewBox="0 0 10 10"><path d="M0 0l10 5-10 5z" fill="#4c5360"/></svg></td>
            <td class="tx">${t}</td>
          </tr>`)}
        </table>
      </div>
    </div>`;
  }

  renderStatus() {
    return html`<div class="status">
      ${STATUS_TEXT.map(([t, w]) => html`<span class="st" style="width:${w}px">${t}</span>`)}
      ${STATUS_BTNS.map(([n, w, car, dim], i) => html`<div class="sbtn ${i === STATUS_SEL ? "sel" : ""} ${dim ? "dim" : ""}" style="width:${w}px">${ic(n, 22)}${car ? html`<i class="car"></i>` : ""}</div>`)}
      <span class="st bright">CAD图亮度：100%</span>
      <div class="sbtn zm">${ic("zoomOut", 18)}</div>
      <div class="slider"></div>
      <div class="thumb"></div>
      <div class="sbtn zm">${ic("zoomIn", 18)}</div>
    </div>`;
  }

  renderTask() {
    return html`<div class="task">
      <div class="start">${tb("win", 20)}</div>
      <div class="tsearch">${tb("mag", 24)}<span>在这里输入你要搜索的内容</span></div>
      <div class="tslot first">${tb("circle")}</div>
      <div class="tslot">${tb("view")}</div>
      <div class="tslot">${tb("edge")}</div>
      <div class="tslot">${tb("bag")}</div>
      <div class="tslot">${tb("folder")}</div>
      <div class="tslot run">${tb("wechat")}</div>
      <div class="tslot">${tb("monitor")}</div>
      <div class="tslot run">${tb("cyan")}</div>
      <div class="tslot act">${tb("app")}</div>
      <div class="tray">
        <span class="moon">${tb("moon", 30)}</span>
        <span class="weather">0°C&nbsp;&nbsp;晴朗</span>
        <span></span>
        ${tb("chev")}${tb("shield")}${tb("batt")}${tb("wifi")}${tb("mute", 28)}
        <span class="ime">英</span>
        <div class="clock">20:34<br />2022/11/16</div>
        <div class="noti">${tb("note", 28)}<span class="badge">1</span></div>
      </div>
    </div>`;
  }

  render() {
    return html`
      ${this.renderHead()}
      ${this.renderRibbon()}
      <div class="selbar">
        ${SELECTS.map((s, i) => html`<div class="selbox ${i === 5 ? "last" : ""}">${s}<i class="car"></i></div>`)}
      </div>
      <div class="main">
        ${this.renderNav()}
        ${this.renderMid()}
        <div class="split"><div class="grip"></div></div>
        ${this.renderCanvas()}
        <div class="split"><div class="grip"></div></div>
        ${this.renderRight()}
      </div>
      ${this.renderStatus()}
      ${this.renderTask()}
      <div class="tip">
        <div class="tip-logo"><svg width="34" height="36" viewBox="0 0 34 36" fill="none" stroke="#c8ccd2" stroke-width="2.500"><path d="M17 2l13 5c1 11-3 21-13 27C7 28 3 18 4 7z"/><path d="M8 10l9 14 9-14c-5 3-13 3-18 0z"/></svg></div>
        <div class="tip-top">内存已超标，需要 <em>深度加速</em></div>
        <div class="tip-x"><svg width="14" height="14" viewBox="0 0 14 14"><path d="M1 1l12 12M13 1L1 13" stroke="#c8ccd2" stroke-width="1.200"/></svg></div>
        <div class="tip-bot"><span>深度加速关闭卡慢进程</span><div class="tip-btn">深度加速</div></div>
      </div>
    `;
  }
}
